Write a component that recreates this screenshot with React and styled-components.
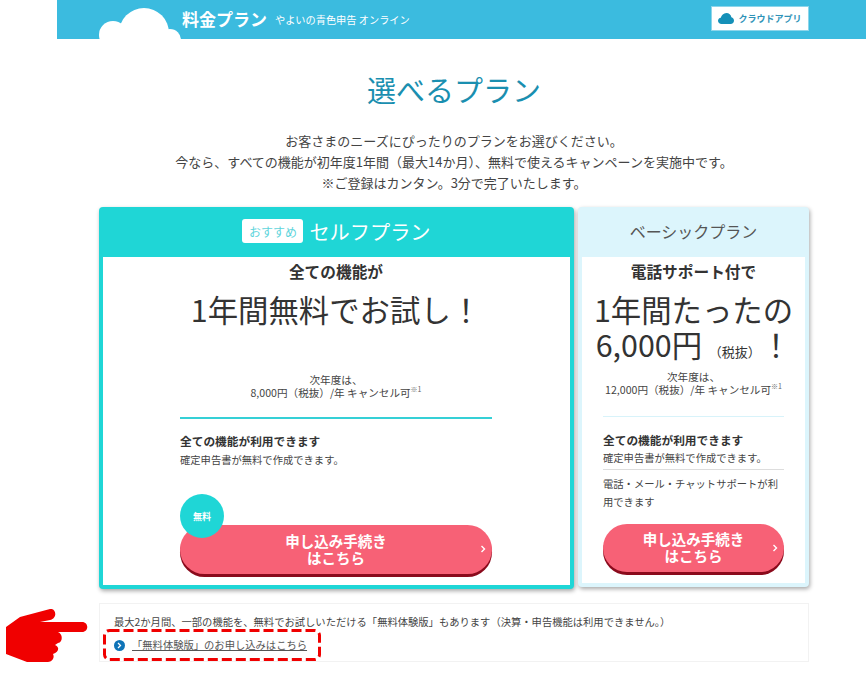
import React from "react";
import styled, { createGlobalStyle } from "styled-components";

const Global = createGlobalStyle`
  html, body { margin: 0; padding: 0; background: #fff; }
  body { font-family: "Noto Sans CJK JP", "Noto Sans", sans-serif; color: #333; overflow: hidden; }
  * { box-sizing: border-box; }
`;

const Page = styled.div`
  position: relative;
  width: 866px;
  height: 680px;
  padding-left: 57px;
  overflow: hidden;
`;
const Header = styled.header`
  height: 39px;
  background: #3bbbdf;
  display: flex;
  align-items: center;
  padding: 0 57px 0 42px;
  overflow: hidden;
`;
const Cloud = styled.svg`
  width: 82px;
  height: 32px;
  margin-top: 7px;
  flex: none;
`;
const HeaderTitle = styled.span`
  margin-left: 1px;
  font-size: 17px;
  font-weight: 700;
  color: #fff;
  margin-top: -2px;
`;
const HeaderSub = styled.span`
  margin-left: 8px;
  font-size: 10.2px;
  color: #fff;
`;
const AppButton = styled.div`
  margin-left: auto;
  width: 98px;
  height: 25px;
  background: #fff;
  border: 1px solid #8dd5ea;
  display: flex;
  align-items: center;
  justify-content: center;
  gap: 4px;
  color: #2f93b8;
  font-size: 9px;
  font-weight: 700;
  margin-top: -2px;
`;
const Heading = styled.h1`
  margin: 28px 15px 0 0;
  height: 44px;
  line-height: 44px;
  font-size: 29px;
  font-weight: 400;
  color: #1a8fb0;
  text-align: center;
`;
const Lead = styled.p`
  margin: 19px 15px 0 0;
  text-align: center;
  font-size: 13px;
  line-height: 21px;
  color: #444;
`;
const Plans = styled.div`
  margin: 14px 57px 0 42px;
  display: grid;
  grid-template-columns: 475px 231px;
  column-gap: 4px;
  height: 382px;
`;
const Card = styled.section`
  background: ${(p) => p.$bg};
  border-radius: 4px;
  padding: 0 4px 4px;
  margin-bottom: ${(p) => p.$cut}px;
  box-shadow: 1px 2px 4px rgba(0, 0, 0, 0.35);
  display: flex;
  flex-direction: column;
`;
const CardHead = styled.div`
  height: 50px;
  padding-bottom: ${(p) => p.$lift}px;
  display: flex;
  align-items: center;
  justify-content: center;
  gap: 6px;
  font-size: ${(p) => p.$size}px;
  color: ${(p) => p.$color};
`;
const Badge = styled.span`
  background: #fff;
  color: #5fd5dc;
  border-radius: 3px;
  font-size: 12px;
  width: 61px;
  height: 24px;
  display: flex;
  align-items: center;
  justify-content: center;
`;
const CardBody = styled.div`
  flex: 1;
  background: #fff;
  display: flex;
  flex-direction: column;
  align-items: stretch;
  padding: 0 ${(p) => p.$right}px 0 ${(p) => p.$left}px;
`;
const Kicker = styled.div`
  text-align: center;
  font-size: 15.7px;
  font-weight: 700;
  line-height: 20px;
  margin-top: 5px;
  color: #333;
`;
const Big = styled.div`
  text-align: center;
  font-size: 30.4px;
  line-height: 42px;
  color: #333;
  margin: ${(p) => p.$top}px -20px 0;
  white-space: nowrap;
`;
const Small = styled.span`
  font-size: 13px;
`;
const Next = styled.div`
  text-align: center;
  font-size: 10.6px;
  line-height: 13px;
  color: #444;
  margin-top: ${(p) => p.$top}px;
`;
const Sup = styled.sup`
  font-size: 7px;
  line-height: 0;
  color: #666;
`;
const Rule = styled.hr`
  width: 100%;
  border: 0;
  border-top: ${(p) => p.$w}px solid ${(p) => p.$c};
  margin: ${(p) => p.$m};
`;
const FeatureTitle = styled.div`
  font-size: 11.7px;
  font-weight: 700;
  line-height: 16px;
  color: #333;
`;
const FeatureText = styled.div`
  font-size: 10.3px;
  line-height: 18px;
  color: #444;
  margin-top: ${(p) => p.$top}px;
`;
const ButtonWrap = styled.div`
  margin-top: auto;
  margin-bottom: ${(p) => p.$bottom}px;
  position: relative;
`;
const Cta = styled.div`
  height: ${(p) => p.$h}px;
  border-radius: 26px;
  background: #f76176;
  box-shadow: 0 3px 0 #8a0a1c;
  color: #fff;
  font-size: 14.5px;
  font-weight: 700;
  line-height: 17px;
  text-align: center;
  padding-bottom: 2px;
  display: flex;
  align-items: center;
  justify-content: center;
  position: relative;
`;
const Chevron = styled.svg`
  position: absolute;
  right: 6px;
  top: 20px;
  width: 6px;
  height: 8px;
`;
const Free = styled.div`
  position: absolute;
  left: 0;
  top: -31px;
  width: 44px;
  height: 44px;
  border-radius: 50%;
  background: #1fd6d6;
  color: #fff;
  font-size: 9px;
  font-weight: 700;
  display: flex;
  align-items: center;
  justify-content: center;
`;
const Notice = styled.div`
  margin: 14px 57px 0 42px;
  height: 59px;
  border: 1px solid #f2f2f2;
  padding: 9px 14px;
  font-size: 10.3px;
  color: #444;
`;
const NoticeLine = styled.div`
  line-height: 18px;
`;
const NoticeLink = styled.div`
  display: flex;
  align-items: center;
  gap: 7px;
  margin-top: 7px;
  line-height: 14px;
`;
const Bullet = styled.span`
  width: 11px;
  height: 11px;
  border-radius: 50%;
  background: #0f74b8;
  display: flex;
  align-items: center;
  justify-content: center;
`;
const LinkText = styled.a`
  color: #555;
  text-decoration: underline;
`;
const Dashed = styled.svg`
  position: absolute;
  left: 103px;
  top: 629px;
  width: 218px;
  height: 32px;
`;
const Hand = styled.svg`
  position: absolute;
  left: 6px;
  top: 609px;
  width: 82px;
  height: 53px;
`;

function ApplyButton({ height }) {
  return (
    <Cta $h={height}>
      <span>
        申し込み手続き
        <br />
        はこちら
      </span>
      <Chevron viewBox="0 0 6 8">
        <path d="M1.5 1L4.5 4L1.5 7" fill="none" stroke="#fff" strokeWidth="1.4" />
      </Chevron>
    </Cta>
  );
}

export default function App() {
  return (
    <>
      <Global />
      <Page>
        <Header>
          <Cloud viewBox="0 0 82 32">
            <g fill="#fff">
              <circle cx="14" cy="28" r="14" />
              <circle cx="45" cy="26" r="25" />
              <circle cx="71" cy="33" r="11" />
            </g>
          </Cloud>
          <HeaderTitle>料金プラン</HeaderTitle>
          <HeaderSub>やよいの青色申告 オンライン</HeaderSub>
          <AppButton>
            <svg width="16" height="11" viewBox="0 0 16 11">
              <path
                d="M3.5 11C1.5 11 0 9.6 0 7.8C0 6.2 1.2 5 2.8 4.8C3.4 2.2 5.6 0 8.4 0C11 0 13 1.8 13.4 4.2C15 4.6 16 6 16 7.6C16 9.6 14.6 11 12.6 11Z"
                fill="#1590b8"
              />
            </svg>
            クラウドアプリ
          </AppButton>
        </Header>
        <Heading>選べるプラン</Heading>
        <Lead>
          お客さまのニーズにぴったりのプランをお選びください。
          <br />
          今なら、すべての機能が初年度1年間（最大14か月）、無料で使えるキャンペーンを実施中です。
          <br />
          ※ご登録はカンタン。3分で完了いたします。
        </Lead>
        <Plans>
          <Card $bg="#1fd6d6" $cut={0}>
            <CardHead $size={20.2} $color="#fff" $lift={2}>
              <Badge>おすすめ</Badge>
              セルフプラン
            </CardHead>
            <CardBody $left={77} $right={78}>
              <Kicker>全ての機能が</Kicker>
              <Big $top={6}>1年間無料でお試し！</Big>
              <Next $top={43}>
                次年度は、
                <br />
                8,000円（税抜）/年 キャンセル可<Sup>※1</Sup>
              </Next>
              <Rule $w={2} $c="#35d0d6" $m="18px 0 14px" />
              <FeatureTitle>全ての機能が利用できます</FeatureTitle>
              <FeatureText $top={2}>確定申告書が無料で作成できます。</FeatureText>
              <ButtonWrap $bottom={11}>
                <ApplyButton height={49} />
                <Free>無料</Free>
              </ButtonWrap>
            </CardBody>
          </Card>
          <Card $bg="#dcf5fc" $cut={2}>
            <CardHead $size={16} $color="#555" $lift={3}>
              ベーシックプラン
            </CardHead>
            <CardBody $left={21} $right={21}>
              <Kicker>電話サポート付で</Kicker>
              <Big $top={6}>1年間たったの</Big>
              <Big $top={-7}>
                6,000円 <Small>（税抜）</Small>！
              </Big>
              <Next $top={-3}>
                次年度は、
                <br />
                12,000円（税抜）/年 キャンセル可<Sup>※1</Sup>
              </Next>
              <Rule $w={1} $c="#d8f3fa" $m="20px 0 15px" />
              <FeatureTitle>全ての機能が利用できます</FeatureTitle>
              <FeatureText $top={1}>確定申告書が無料で作成できます。</FeatureText>
              <Rule $w={1} $c="#ddd" $m="2px 0 0" />
              <FeatureText $top={5}>電話・メール・チャットサポートが利用できます</FeatureText>
              <ButtonWrap $bottom={11}>
                <ApplyButton height={48} />
              </ButtonWrap>
            </CardBody>
          </Card>
        </Plans>
        <Notice>
          <NoticeLine>
            最大2か月間、一部の機能を、無料でお試しいただける「無料体験版」もあります（決算・申告機能は利用できません。）
          </NoticeLine>
          <NoticeLink>
            <Bullet>
              <svg width="5" height="7" viewBox="0 0 5 7">
                <path d="M1 1L3.5 3.5L1 6" fill="none" stroke="#fff" strokeWidth="1.3" />
              </svg>
            </Bullet>
            <LinkText>「無料体験版」のお申し込みはこちら</LinkText>
          </NoticeLink>
        </Notice>
        <Dashed viewBox="0 0 218 32">
          <rect
            x="1.5"
            y="1.5"
            width="215"
            height="29"
            rx="5"
            fill="none"
            stroke="#f00000"
            strokeWidth="3"
            strokeDasharray="10 4"
          />
        </Dashed>
        <Hand viewBox="0 0 82 53">
          <path
            d="M0 18L14 8L44 0C50 -1 52 9 44 11L34 13L76 13C83 13 83 23 76 23L52 23C57 25 57 33 52 34L49 36C54 38 53 43 47 45C49 49 46 53 42 53L21 53L0 45Z"
            fill="#f00000"
          />
        </Hand>
      </Page>
    </>
  );
}
